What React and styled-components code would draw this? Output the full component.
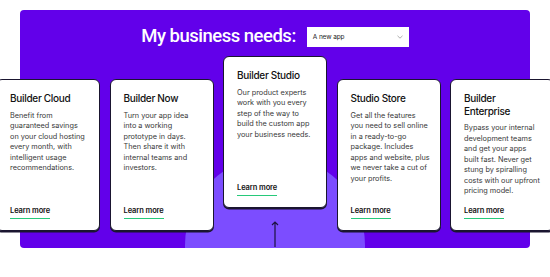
import styled, { createGlobalStyle } from 'styled-components';

const Global = createGlobalStyle`
  html, body { margin: 0; padding: 0; background: #fff; overflow: hidden; }
  body { font-family: Inter, "Noto Sans", sans-serif; }
`;

const Page = styled.div`
  width: 550px;
  padding-top: 10px;
  overflow: hidden;
`;

const Panel = styled.section`
  position: relative;
  margin: 0 20px;
  height: 238px;
  background: #6200ea;
  border-radius: 4px;
`;

const Backdrop = styled.div`
  position: absolute;
  inset: 0;
  overflow: hidden;
  border-radius: 4px;
  &::after {
    content: '';
    position: absolute;
    left: 165px;
    top: 145px;
    width: 180px;
    height: 180px;
    border-radius: 50%;
    background: #7c4dff;
  }
`;

const Content = styled.div`
  position: relative;
  display: flex;
  flex-direction: column;
  align-items: center;
`;

const Header = styled.div`
  display: flex;
  align-items: center;
  gap: 11px;
  margin-top: 16px;
  height: 21px;
`;

const Heading = styled.h1`
  margin: 0;
  color: #fff;
  font-family: Roboto, "Noto Sans", sans-serif;
  font-size: 18.5px;
  font-weight: 500;
  letter-spacing: -0.5px;
  line-height: 21px;
`;

const Select = styled.div`
  width: 102px;
  height: 20px;
  box-sizing: border-box;
  background: #fff;
  display: flex;
  align-items: center;
  justify-content: space-between;
  padding: 0 6px;
  font-size: 6.5px;
  color: #222;
  letter-spacing: -0.1px;
`;

const Cards = styled.div`
  display: flex;
  align-items: flex-start;
  gap: 9.5px;
  margin-top: 9px;
  width: 558px;
`;

const Column = styled.div`
  display: flex;
  flex-direction: column;
  align-items: center;
  margin-top: ${p => (p.raised ? 0 : 23)}px;
`;

const Card = styled.article`
  width: 104px;
  height: 152px;
  box-sizing: border-box;
  background: #fff;
  border: 1px solid #1a1530;
  border-radius: 6px;
  box-shadow: 0 1.5px 0 #1a1530;
  padding: 12px 13px 11px;
  display: flex;
  flex-direction: column;
`;

const Title = styled.h2`
  margin: 0;
  font-size: 10px;
  font-weight: 500;
  letter-spacing: -0.3px;
  line-height: 12.7px;
  color: #111;
`;

const Body = styled.p`
  margin: 6px 0 0;
  font-size: 7.3px;
  line-height: 10.5px;
  color: #383838;
  white-space: nowrap;
`;

const Learn = styled.a`
  margin-top: auto;
  align-self: flex-start;
  font-size: 7.5px;
  font-weight: 600;
  color: #111;
  letter-spacing: -0.1px;
  text-decoration: none;
  line-height: 10px;
  padding-bottom: 2px;
  border-bottom: 1.5px solid #27c97a;
`;

const Arrow = styled.svg`
  display: block;
  margin-top: 13px;
`;

const cards = [
  { title: 'Builder Cloud', lines: ['Benefit from', 'guaranteed savings', 'on your cloud hosting', 'every month, with', 'intelligent usage', 'recommendations.'] },
  { title: 'Builder Now', lines: ['Turn your app idea', 'into a working', 'prototype in days.', 'Then share it with', 'internal teams and', 'investors.'] },
  { title: 'Builder Studio', raised: true, lines: ['Our product experts', 'work with you every', 'step of the way to', 'build the custom app', 'your business needs.'] },
  { title: 'Studio Store', lines: ['Get all the features', 'you need to sell online', 'in a ready-to-go', 'package. Includes', 'apps and website, plus', 'we never take a cut of', 'your profits.'] },
  { title: 'Builder Enterprise', lines: ['Bypass your internal', 'development teams', 'and get your apps', 'built fast. Never get', 'stung by spiralling', 'costs with our upfront', 'pricing model.'] },
];

export default function App() {
  return (
    <Page>
      <Global />
      <Panel>
        <Backdrop />
        <Content>
          <Header>
            <Heading>My business needs:</Heading>
            <Select>
              <span>A new app</span>
              <svg width="6" height="4" viewBox="0 0 6 4">
                <path d="M0.5 0.8 L3 3.2 L5.5 0.8" fill="none" stroke="#999" strokeWidth="0.8" />
              </svg>
            </Select>
          </Header>
          <Cards>
            {cards.map(c => (
              <Column key={c.title} raised={c.raised}>
                <Card>
                  <Title>{c.title}</Title>
                  <Body>
                    {c.lines.map((l, i) => (
                      <span key={i}>{l}<br /></span>
                    ))}
                  </Body>
                  <Learn href="#">Learn more</Learn>
                </Card>
                {c.raised && (
                  <Arrow width="10" height="26" viewBox="0 0 10 26">
                    <path d="M5 1 V26 M2 4 L5 1 L8 4" fill="none" stroke="#1c1240" strokeWidth="1.2" />
                  </Arrow>
                )}
              </Column>
            ))}
          </Cards>
        </Content>
      </Panel>
    </Page>
  );
}
